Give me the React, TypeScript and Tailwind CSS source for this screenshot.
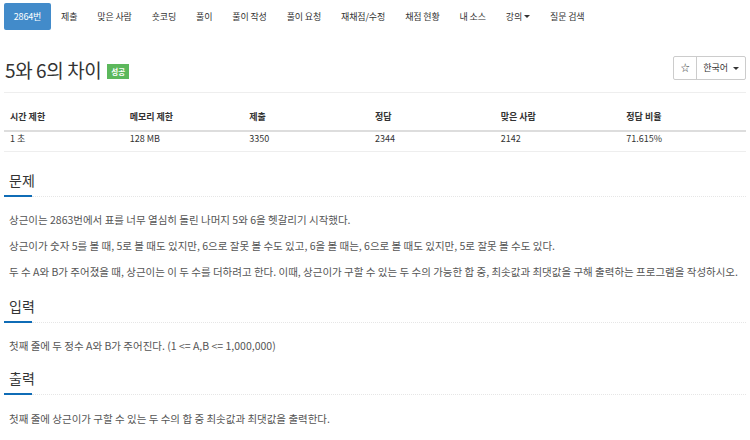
import React from 'react';

const navItems = ['제출', '맞은 사람', '숏코딩', '풀이', '풀이 작성', '풀이 요청', '재채점/수정', '채점 현황', '내 소스'];

const stats = [
  ['시간 제한', '1 초'],
  ['메모리 제한', '128 MB'],
  ['제출', '3350'],
  ['정답', '2344'],
  ['맞은 사람', '2142'],
  ['정답 비율', '71.615%'],
];

const Section: React.FC<{ title: string; gap: string; children: React.ReactNode }> = ({ title, gap, children }) => (
  <section>
    <div className="pl-[5px] text-[14px] leading-[20px] text-[#333]">{title}</div>
    <div className="mt-[5px] flex items-center">
      <div className="h-[2px] w-[28px] bg-[#0f6cb6]" />
      <div className="flex-1 border-t border-dotted border-[#e6e6e6]" />
    </div>
    <div className={`${gap} pl-[5px] text-[10.5px] text-[#555]`}>{children}</div>
  </section>
);

export default function App() {
  return (
    <div className="w-[750px] h-[440px] overflow-hidden bg-white px-[4px]" style={{ fontFamily: '"Noto Sans CJK KR", "Noto Sans", sans-serif' }}>
      {/* 상단 탭 */}
      <nav className="flex items-center pt-[3px] text-[9px] text-[#333] tracking-[-0.15px]">
        <div className="h-[27px] w-[47px] flex items-center justify-center bg-[#428bca] text-white rounded-[2px]">2864번</div>
        {navItems.map((n) => (
          <div key={n} className="px-[10px] h-[27px] flex items-center">{n}</div>
        ))}
        <div className="px-[10px] h-[27px] flex items-center gap-[2px]">
          강의
          <span className="inline-block border-x-[3px] border-t-[3px] border-x-transparent border-t-[#333]" />
        </div>
        <div className="px-[10px] h-[27px] flex items-center">질문 검색</div>
      </nav>

      {/* 제목 */}
      <div className="mt-[25px] flex items-start justify-between">
        <div className="flex items-center pl-[1px] pt-[2px]">
          <h1 className="text-[19px] leading-[26px] text-[#333] tracking-[-0.4px]">5와 6의 차이</h1>
          <span className="ml-[6px] mt-[2px] bg-[#5cb85c] text-white text-[7.5px] font-bold px-[4px] py-[3px] leading-[9px]">성공</span>
        </div>
        <div className="flex border border-[#ccc] rounded-[2px] text-[9px] text-[#333] h-[24px] mt-[1px]">
          <div className="w-[23px] flex items-center justify-center border-r border-[#ccc]">☆</div>
          <div className="flex items-center gap-[5px] px-[6px]">
            한국어
            <span className="inline-block border-x-[3px] border-t-[3px] border-x-transparent border-t-[#333]" />
          </div>
        </div>
      </div>
      <div className="mt-[9px] border-t border-[#eee]" />

      {/* 제한 표 */}
      <div className="mt-[17px] text-[9px] text-[#333]">
        <div className="flex border-b-2 border-[#ddd] pb-[6px] font-bold">
          {stats.map(([h], i) => (
            <div key={h} className={i < 2 ? 'w-[120px] pl-[6px]' : 'w-[126px] pl-[6px]'}>{h}</div>
          ))}
        </div>
        <div className="flex pt-0 pb-[6px] border-b border-[#eee]">
          {stats.map(([h, v], i) => (
            <div key={h} className={i < 2 ? 'w-[120px] pl-[6px]' : 'w-[126px] pl-[6px]'}>{v}</div>
          ))}
        </div>
      </div>

      <div className="mt-[18px]">
        <Section title="문제" gap="mt-[15px]">
          <p className="leading-[16px]">상근이는 2863번에서 표를 너무 열심히 돌린 나머지 5와 6을 헷갈리기 시작했다.</p>
          <p className="mt-[10px] leading-[16px]">상근이가 숫자 5를 볼 때, 5로 볼 때도 있지만, 6으로 잘못 볼 수도 있고, 6을 볼 때는, 6으로 볼 때도 있지만, 5로 잘못 볼 수도 있다.</p>
          <p className="mt-[10px] leading-[16px]">두 수 A와 B가 주어졌을 때, 상근이는 이 두 수를 더하려고 한다. 이때, 상근이가 구할 수 있는 두 수의 가능한 합 중, 최솟값과 최댓값을 구해 출력하는 프로그램을 작성하시오.</p>
        </Section>
      </div>
      <div className="mt-[16px]">
        <Section title="입력" gap="mt-[15px]">
          <p className="leading-[16px]">첫째 줄에 두 정수 A와 B가 주어진다. (1 &lt;= A,B &lt;= 1,000,000)</p>
        </Section>
      </div>
      <div className="mt-[14px]">
        <Section title="출력" gap="mt-[16px]">
          <p className="leading-[16px]">첫째 줄에 상근이가 구할 수 있는 두 수의 합 중 최솟값과 최댓값을 출력한다.</p>
        </Section>
      </div>
    </div>
  );
}
